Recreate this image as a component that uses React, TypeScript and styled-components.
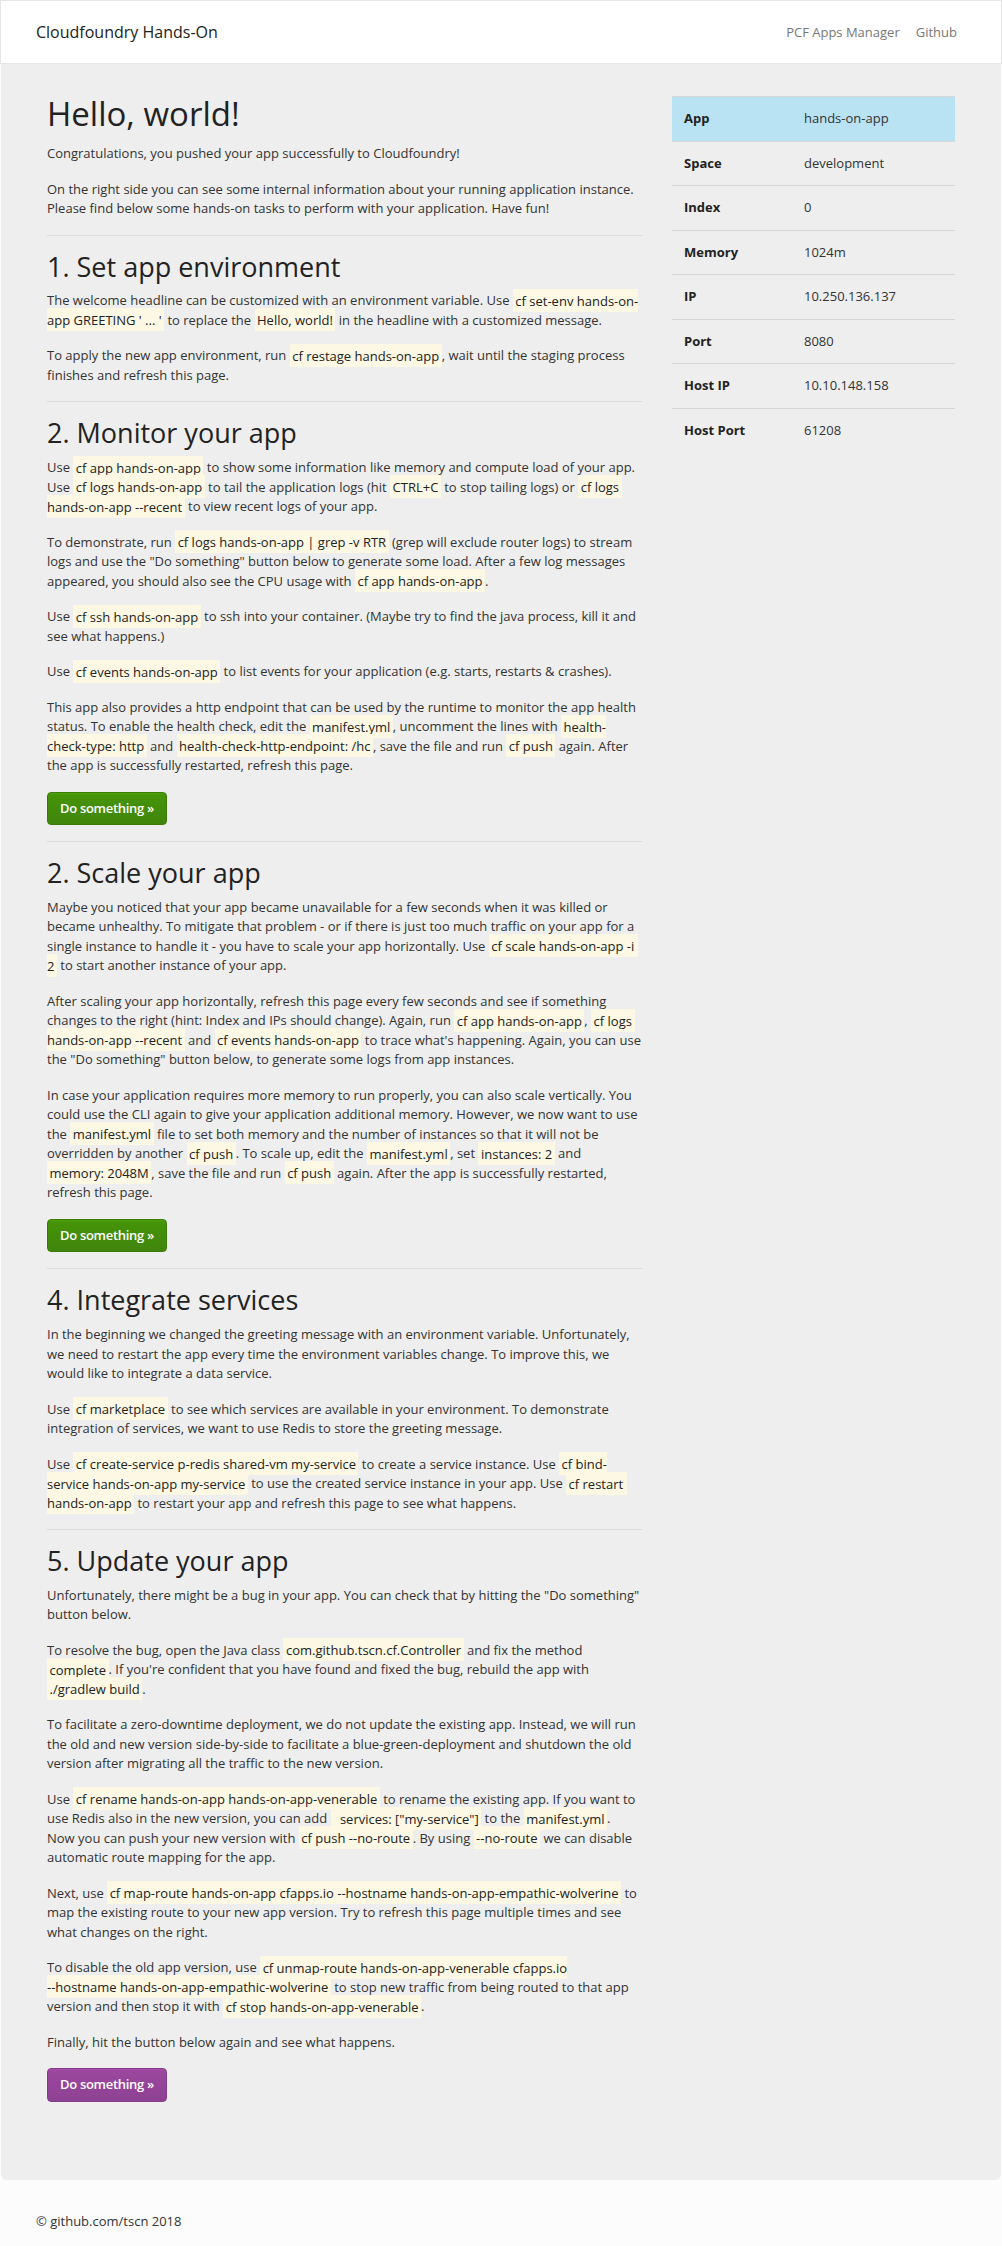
import React from "react";
import styled, { createGlobalStyle, css } from "styled-components";

const GlobalStyle = createGlobalStyle`
  html, body {
    margin: 0;
    padding: 0;
    background: #fcfcfc;
  }
  body {
    font-family: "Open Sans", "Helvetica Neue", Arial, sans-serif;
    font-size: 13px;
    line-height: 1.5;
    color: #333;
  }
  * { box-sizing: border-box; }
`;

const Navbar = styled.header`
  display: flex;
  align-items: center;
  justify-content: space-between;
  height: 64px;
  padding: 0 44px 0 35px;
  background: #fff;
  border: 1px solid #e6e6e6;
`;

const Brand = styled.a`
  font-size: 16px;
  color: #222;
  text-decoration: none;
`;

const NavLinks = styled.nav`
  display: flex;
  gap: 16px;
  padding-top: 2px;
`;

const NavLink = styled.a`
  font-size: 13px;
  color: #777;
  text-decoration: none;
`;

const Jumbotron = styled.main`
  margin: 0 1px;
  background: #eeeeee;
  border-radius: 0 0 6px 6px;
  padding: 32px 46px 78px;
  display: grid;
  grid-template-columns: 595px 283px;
  column-gap: 30px;
  align-items: start;
`;

const MainColumn = styled.div`
  display: block;
`;

const Title = styled.h1`
  font-size: 33px;
  font-weight: 400;
  line-height: 1.1;
  color: #222;
  margin: 0 0 12px;
`;

const SectionTitle = styled.h2`
  font-size: 27px;
  font-weight: 400;
  line-height: 1.1;
  color: #222;
  margin: 0 0 10px;
`;

const Para = styled.p`
  margin: 0 0.5px 16px 0;
`;

const Divider = styled.hr`
  border: 0;
  border-top: 1px solid #dcdcdc;
  margin: 16px 0;
`;

const Code = styled.code`
  font-family: inherit;
  font-size: 13px;
  color: #222;
  background: #fcf8e3;
  padding: 2.5px 2.5px;
  white-space: pre-wrap;
`;

const ButtonRow = styled.p<{ $last?: boolean }>`
  margin: 0 0 ${(p) => (p.$last ? "0" : "16px")};
`;

const Button = styled.a<{ $variant: "success" | "warning" }>`
  display: inline-block;
  padding: 6px 12px;
  font-size: 13px;
  font-weight: 600;
  letter-spacing: -0.3px;
  line-height: 1.5;
  color: #fff;
  text-decoration: none;
  border-radius: 4px;
  ${(p) =>
    p.$variant === "success"
      ? css`
          background: linear-gradient(#4da309, #469408 6%, #3f850b);
          border: 1px solid #3b7c07;
        `
      : css`
          background: linear-gradient(#a54caa, #9b479f 6%, #8e4192);
          border: 1px solid #863e8a;
        `}
`;

const InfoTable = styled.table`
  width: 283px;
  border-collapse: collapse;
  table-layout: fixed;
`;

const InfoRow = styled.tr<{ $active?: boolean }>`
  background: ${(p) => (p.$active ? "#b9e2f2" : "transparent")};
`;

const InfoLabel = styled.th`
  width: 120px;
  padding: 12px;
  text-align: left;
  font-weight: 700;
  border-top: 1px solid #d6d6d6;
  color: #222;
`;

const InfoValue = styled.td`
  padding: 12px;
  border-top: 1px solid #d6d6d6;
  color: #333;
`;

const Footer = styled.footer`
  padding: 32px 36px 16px;
  background: #fcfcfc;
  color: #333;
`;

const info: [string, string][] = [
  ["App", "hands-on-app"],
  ["Space", "development"],
  ["Index", "0"],
  ["Memory", "1024m"],
  ["IP", "10.250.136.137"],
  ["Port", "8080"],
  ["Host IP", "10.10.148.158"],
  ["Host Port", "61208"],
];

export default function App() {
  return (
    <>
      <GlobalStyle />
      <Navbar>
        <Brand href="#">Cloudfoundry Hands-On</Brand>
        <NavLinks>
          <NavLink href="#">PCF Apps Manager</NavLink>
          <NavLink href="#">Github</NavLink>
        </NavLinks>
      </Navbar>
      <Jumbotron>
        <MainColumn>
          <Title>Hello, world!</Title>
          <Para>Congratulations, you pushed your app successfully to Cloudfoundry!</Para>
          <Para>
            On the right side you can see some internal information about your running application
            instance. Please find below some hands-on tasks to perform with your application. Have
            fun!
          </Para>
          <Divider />

          <SectionTitle>1. Set app environment</SectionTitle>
          <Para>
            The welcome headline can be customized with an environment variable. Use{" "}
            <Code>cf set-env hands-on-app GREETING ' ... '</Code> to replace the{" "}
            <Code>Hello, world!</Code> in the headline with a customized message.
          </Para>
          <Para>
            To apply the new app environment, run <Code>cf restage hands-on-app</Code>, wait until
            the staging process finishes and refresh this page.
          </Para>
          <Divider />

          <SectionTitle>2. Monitor your app</SectionTitle>
          <Para>
            Use <Code>cf app hands-on-app</Code> to show some information like memory and compute
            load of your app. Use <Code>cf logs hands-on-app</Code> to tail the application logs (hit{" "}
            <Code>CTRL+C</Code> to stop tailing logs) or <Code>cf logs hands-on-app --recent</Code>{" "}
            to view recent logs of your app.
          </Para>
          <Para>
            To demonstrate, run <Code>cf logs hands-on-app | grep -v RTR</Code> (grep will exclude
            router logs) to stream logs and use the "Do something" button below to generate some
            load. After a few log messages appeared, you should also see the CPU usage with{" "}
            <Code>cf app hands-on-app</Code>.
          </Para>
          <Para>
            Use <Code>cf ssh hands-on-app</Code> to ssh into your container. (Maybe try to find the
            java process, kill it and see what happens.)
          </Para>
          <Para>
            Use <Code>cf events hands-on-app</Code> to list events for your application (e.g.
            starts, restarts &amp; crashes).
          </Para>
          <Para>
            This app also provides a http endpoint that can be used by the runtime to monitor the app
            health status. To enable the health check, edit the <Code>manifest.yml</Code>, uncomment
            the lines with <Code>health-check-type: http</Code> and{" "}
            <Code>health-check-http-endpoint: /hc</Code>, save the file and run <Code>cf push</Code>{" "}
            again. After the app is successfully restarted, refresh this page.
          </Para>
          <ButtonRow>
            <Button href="#" $variant="success">Do something »</Button>
          </ButtonRow>
          <Divider />

          <SectionTitle>2. Scale your app</SectionTitle>
          <Para>
            Maybe you noticed that your app became unavailable for a few seconds when it was killed
            or became unhealthy. To mitigate that problem - or if there is just too much traffic on
            your app for a single instance to handle it - you have to scale your app horizontally.
            Use <Code>cf scale hands-on-app -i 2</Code> to start another instance of your app.
          </Para>
          <Para>
            After scaling your app horizontally, refresh this page every few seconds and see if
            something changes to the right (hint: Index and IPs should change). Again, run{" "}
            <Code>cf app hands-on-app</Code>, <Code>cf logs hands-on-app --recent</Code> and{" "}
            <Code>cf events hands-on-app</Code> to trace what's happening. Again, you can use the "Do
            something" button below, to generate some logs from app instances.
          </Para>
          <Para>
            In case your application requires more memory to run properly, you can also scale
            vertically. You could use the CLI again to give your application additional memory.
            However, we now want to use the <Code>manifest.yml</Code> file to set both memory and
            the number of instances so that it will not be overridden by another{" "}
            <Code>cf push</Code>. To scale up, edit the <Code>manifest.yml</Code>, set{" "}
            <Code>instances: 2</Code> and <Code>{"memory:\u00a02048M"}</Code>, save the file and run{" "}
            <Code>cf push</Code> again. After the app is successfully restarted, refresh this page.
          </Para>
          <ButtonRow>
            <Button href="#" $variant="success">Do something »</Button>
          </ButtonRow>
          <Divider />

          <SectionTitle>4. Integrate services</SectionTitle>
          <Para>
            In the beginning we changed the greeting message with an environment variable.
            Unfortunately, we need to restart the app every time the environment variables change.
            To improve this, we would like to integrate a data service.
          </Para>
          <Para>
            Use <Code>cf marketplace</Code> to see which services are available in your
            environment. To demonstrate integration of services, we want to use Redis to store the
            greeting message.
          </Para>
          <Para>
            Use <Code>cf create-service p-redis shared-vm my-service</Code> to create a service
            instance. Use <Code>cf bind-service hands-on-app my-service</Code> to use the created
            service instance in your app. Use <Code>cf restart hands-on-app</Code> to restart your
            app and refresh this page to see what happens.
          </Para>
          <Divider />

          <SectionTitle>5. Update your app</SectionTitle>
          <Para>
            Unfortunately, there might be a bug in your app. You can check that by hitting the "Do
            something" button below.
          </Para>
          <Para>
            To resolve the bug, open the Java class <Code>com.github.tscn.cf.Controller</Code> and
            fix the method <Code>complete</Code>. If you're confident that you have found and fixed
            the bug, rebuild the app with <Code>./gradlew build</Code>.
          </Para>
          <Para>
            To facilitate a zero-downtime deployment, we do not update the existing app. Instead, we
            will run the old and new version side-by-side to facilitate a blue-green-deployment and
            shutdown the old version after migrating all the traffic to the new version.
          </Para>
          <Para>
            Use <Code>cf rename hands-on-app hands-on-app-venerable</Code> to rename the existing
            app. If you want to use Redis also in the new version, you can add{" "}
            <Code>{"  services: [\"my-service\"]"}</Code> to the <Code>manifest.yml</Code>.
            {" Now\u00a0you can push your new version with "}
            <Code>cf push --no-route</Code>. By using <Code>--no-route</Code> we can disable
            automatic route mapping for the app.
          </Para>
          <Para>
            Next, use{" "}
            <Code>cf map-route hands-on-app cfapps.io --hostname hands-on-app-empathic-wolverine</Code>{" "}
            to map the existing route to your new app version. Try to refresh this page multiple
            times and see what changes on the right.
          </Para>
          <Para>
            To disable the old app version, use{" "}
            <Code>{"cf unmap-route hands-on-app-venerable cfapps.io\n--hostname hands-on-app-empathic-wolverine"}</Code>{" "}
            to stop new traffic from being routed to that app version and then stop it with{" "}
            <Code>cf stop hands-on-app-venerable</Code>.
          </Para>
          <Para>Finally, hit the button below again and see what happens.</Para>
          <ButtonRow $last>
            <Button href="#" $variant="warning">Do something »</Button>
          </ButtonRow>
        </MainColumn>

        <InfoTable>
          <tbody>
            {info.map(([label, value], i) => (
              <InfoRow key={label} $active={i === 0}>
                <InfoLabel>{label}</InfoLabel>
                <InfoValue>{value}</InfoValue>
              </InfoRow>
            ))}
          </tbody>
        </InfoTable>
      </Jumbotron>
      <Footer>© github.com/tscn 2018</Footer>
    </>
  );
}
